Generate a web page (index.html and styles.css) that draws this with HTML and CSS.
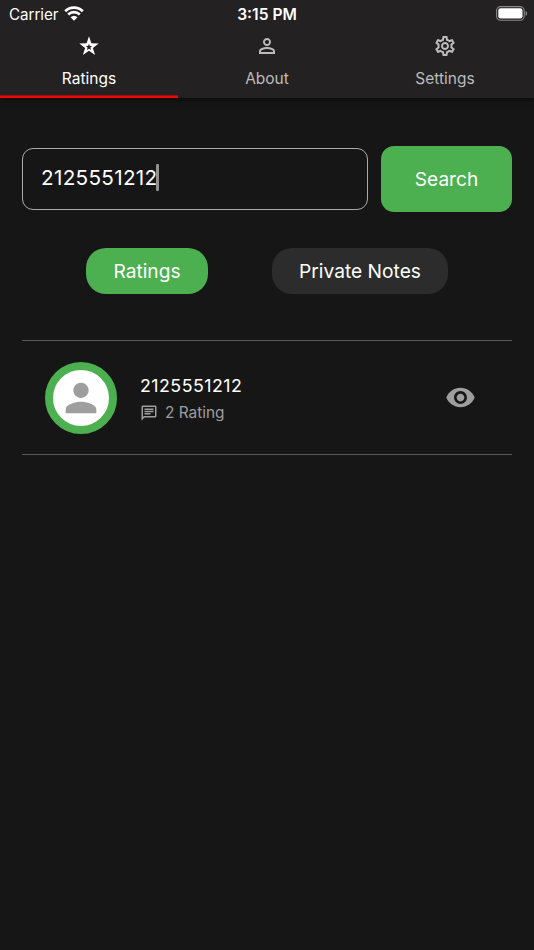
FILE: index.html
```html
<!DOCTYPE html>
<html lang="en">
<head>
<meta charset="utf-8">
<title>Ratings</title>
<link rel="stylesheet" href="styles.css">
</head>
<body>
<header class="header">
  <div class="status">
    <div class="carrier"><span>Carrier</span>
      <svg class="wifi" viewBox="0 0 20 15"><path d="M1.2 5.3a12.6 12.6 0 0 1 17.6 0M4.2 8.5a8.3 8.3 0 0 1 11.6 0" fill="none" stroke="#fff" stroke-width="2.7"/><path d="M6.5 11.3a5.2 5.2 0 0 1 7 0L10 14.8z" fill="#fff"/></svg>
    </div>
    <div class="time">3:15 PM</div>
    <svg class="battery" viewBox="0 0 32 15"><rect x=".6" y=".6" width="27.6" height="13.6" rx="4" fill="none" stroke="#8b8a8b" stroke-width="1.1"/><rect x="2.3" y="2.3" width="24.2" height="10.2" rx="2.3" fill="#fff"/><path d="M29.6 5v5c2-.8 2-4.2 0-5z" fill="#8b8a8b"/></svg>
  </div>
  <nav class="tabs">
    <a class="tab active">
      <svg class="icon" viewBox="0 0 24 24"><path fill="currentColor" fill-rule="evenodd" d="M12 2.2l2.4 7.1 7.3.1-5.8 4.5 2.2 7.2-6.1-4.3-6.1 4.3 2.2-7.2-5.8-4.5 7.3-.1zM12 9.7l-.9 2.2-2.3.2 1.8 1.5-.6 2.3 2-1.2 2 1.2-.6-2.3 1.8-1.5-2.3-.2z"/></svg>
      <span>Ratings</span>
    </a>
    <a class="tab">
      <svg class="icon" viewBox="0 0 24 24"><path fill="currentColor" d="M12 5.9c1.16 0 2.1.94 2.1 2.1s-.94 2.1-2.1 2.1S9.9 9.16 9.9 8s.94-2.1 2.1-2.1m0 9c2.97 0 6.1 1.46 6.1 2.1v1.1H5.9V17c0-.64 3.13-2.1 6.1-2.1M12 4C9.79 4 8 5.79 8 8s1.79 4 4 4 4-1.79 4-4-1.79-4-4-4zm0 9c-2.67 0-8 1.34-8 4v3h16v-3c0-2.66-5.33-4-8-4z"/></svg>
      <span>About</span>
    </a>
    <a class="tab">
      <svg class="icon" viewBox="0 0 24 24"><path fill="currentColor" d="M19.43 12.98c.04-.32.07-.64.07-.98 0-.34-.03-.66-.07-.98l2.11-1.65c.19-.15.24-.42.12-.64l-2-3.46c-.09-.16-.26-.25-.44-.25-.06 0-.12.01-.17.03l-2.49 1c-.52-.4-1.08-.73-1.69-.98l-.38-2.65C14.46 2.18 14.25 2 14 2h-4c-.25 0-.46.18-.49.42l-.38 2.65c-.61.25-1.17.59-1.69.98l-2.49-1c-.06-.02-.12-.03-.18-.03-.17 0-.34.09-.43.25l-2 3.46c-.13.22-.07.49.12.64l2.11 1.65c-.04.32-.07.65-.07.98 0 .33.03.66.07.98l-2.11 1.65c-.19.15-.24.42-.12.64l2 3.46c.09.16.26.25.44.25.06 0 .12-.01.17-.03l2.49-1c.52.4 1.08.73 1.69.98l.38 2.65c.03.24.24.42.49.42h4c.25 0 .46-.18.49-.42l.38-2.65c.61-.25 1.17-.59 1.69-.98l2.49 1c.06.02.12.03.18.03.17 0 .34-.09.43-.25l2-3.46c.12-.22.07-.49-.12-.64l-2.11-1.65zm-1.98-1.71c.04.31.05.52.05.73 0 .21-.02.43-.05.73l-.14 1.13.89.7 1.08.84-.7 1.21-1.27-.51-1.04-.42-.9.68c-.43.32-.84.56-1.25.73l-1.06.43-.16 1.13-.2 1.35h-1.4l-.19-1.35-.16-1.13-1.06-.43c-.43-.18-.83-.41-1.23-.71l-.91-.7-1.06.43-1.27.51-.7-1.21 1.08-.84.89-.7-.14-1.13c-.03-.31-.05-.54-.05-.74s.02-.43.05-.73l.14-1.13-.89-.7-1.08-.84.7-1.21 1.27.51 1.04.42.9-.68c.43-.32.84-.56 1.25-.73l1.06-.43.16-1.13.2-1.35h1.39l.19 1.35.16 1.13 1.06.43c.43.18.83.41 1.23.71l.91.7 1.06-.43 1.27-.51.7 1.21-1.07.85-.89.7.14 1.13zM12 8c-2.21 0-4 1.79-4 4s1.79 4 4 4 4-1.79 4-4-1.79-4-4-4zm0 6c-1.1 0-2-.9-2-2s.9-2 2-2 2 .9 2 2-.9 2-2 2z"/></svg>
      <span>Settings</span>
    </a>
  </nav>
</header>
<main class="main">
  <div class="search-row">
    <div class="field"><span class="field-text">2125551212</span><i class="caret"></i></div>
    <div class="search-btn"><span>Search</span></div>
  </div>
  <div class="filters">
    <div class="pill pill-on"><span>Ratings</span></div>
    <div class="pill pill-off"><span>Private Notes</span></div>
  </div>
  <section class="result">
    <div class="avatar"><svg viewBox="0 0 24 24"><path fill="#9e9e9e" d="M12 12c2.21 0 4-1.79 4-4s-1.79-4-4-4-4 1.79-4 4 1.79 4 4 4zm0 2c-2.67 0-8 1.34-8 4v2h16v-2c0-2.66-5.33-4-8-4z"/></svg></div>
    <div class="info">
      <div class="number">2125551212</div>
      <div class="meta"><svg viewBox="0 0 24 24"><path fill="currentColor" d="M4 4h16v12H5.17L4 17.17V4m0-2c-1.1 0-1.99.9-1.99 2L2 22l4-4h14c1.1 0 2-.9 2-2V4c0-1.1-.9-2-2-2H4zm2 10h8v2H6v-2zm0-3h12v2H6V9zm0-3h12v2H6V6z"/></svg><span>2 Rating</span></div>
    </div>
    <svg class="eye" viewBox="0 0 24 24"><path fill="#9e9e9e" d="M12 4.5C7 4.5 2.73 7.61 1 12c1.73 4.39 6 7.5 11 7.5s9.27-3.11 11-7.5c-1.73-4.39-6-7.5-11-7.5zM12 17c-2.76 0-5-2.24-5-5s2.24-5 5-5 5 2.24 5 5-2.24 5-5 5zm0-8c-1.66 0-3 1.34-3 3s1.34 3 3 3 3-1.34 3-3-1.34-3-3-3z"/></svg>
  </section>
</main>
</body>
</html>
```
FILE: styles.css
```css
* { box-sizing: border-box; }
body {
  margin: 0;
  height: 950px;
  overflow: hidden;
  background: #161616;
  color: #fff;
  font-family: Inter, "Liberation Sans", sans-serif;
}
svg { display: block; flex: none; }
span { white-space: nowrap; }
.header {
  height: 98px;
  background: #232122;
  box-shadow: 0 2px 5px rgba(0, 0, 0, .55);
}
.status {
  height: 28px;
  padding: 0 6px 0 9px;
  display: grid;
  grid-template-columns: 1fr auto 1fr;
  align-items: center;
}
.carrier { display: flex; align-items: center; gap: 6px; font-size: 15.2px; letter-spacing: -.05px; }
.wifi { width: 20px; height: 15px; margin-top: -2px; }
.time { font-size: 15.6px; font-weight: 600; margin-right: 3px; }
.battery { width: 32px; height: 15px; justify-self: end; margin-top: -1px; }
.tabs { display: grid; grid-template-columns: repeat(3, 1fr); height: 70px; }
.tab {
  display: flex;
  flex-direction: column;
  align-items: center;
  padding-top: 6px;
  gap: 11px;
  color: #bdbcbc;
  font-size: 15.5px;
  line-height: 20px;
  border-bottom: 2px solid transparent;
}
.tab.active { color: #fff; border-bottom-color: #f50500; box-shadow: inset 0 -1px 0 #a30d0b; }
.icon { width: 24px; height: 24px; }
.main { padding: 48px 22px 0; }
.search-row { display: flex; align-items: center; gap: 13px; }
.field {
  width: 346px;
  height: 62px;
  border: 1px solid #aaa;
  border-radius: 11px;
  display: flex;
  align-items: center;
  padding: 0 0 3px 18px;
  font-size: 20.7px;
  letter-spacing: .3px;
}
.caret { width: 3px; height: 27px; background: #909090; border-radius: 1px; margin-left: -1px; }
.search-btn {
  width: 131px;
  height: 66px;
  border-radius: 13px;
  background: #4caf50;
  display: grid;
  place-items: center;
  padding-bottom: 1px;
  font-size: 19.1px;
}
.filters { display: flex; gap: 64px; padding: 36px 0 0 64px; }
.pill {
  height: 46px;
  border-radius: 20px;
  display: grid;
  place-items: center;
  font-size: 19.2px;
}
.pill-on { width: 122px; background: #4caf50; }
.pill-off { width: 176px; background: #2c2c2c; }
.result {
  margin-top: 46px;
  height: 115px;
  border-top: 1px solid #595959;
  border-bottom: 1px solid #595959;
  display: flex;
  align-items: center;
  padding: 0 36px 0 23px;
}
.avatar {
  width: 72px;
  height: 72px;
  border: 8px solid #4caf50;
  border-radius: 50%;
  background: #fff;
  display: grid;
  place-items: center;
}
.avatar svg { width: 46px; height: 46px; }
.info { margin-left: 23px; padding-top: 3px; flex: 1; }
.number { font-size: 17.8px; line-height: 24px; letter-spacing: .48px; }
.meta {
  display: flex;
  align-items: center;
  gap: 7px;
  margin-top: 3px;
  font-size: 15.4px;
  line-height: 24px;
  color: #9e9e9e;
}
.meta svg { width: 18px; height: 18px; }
.eye { width: 31px; height: 31px; }
```
